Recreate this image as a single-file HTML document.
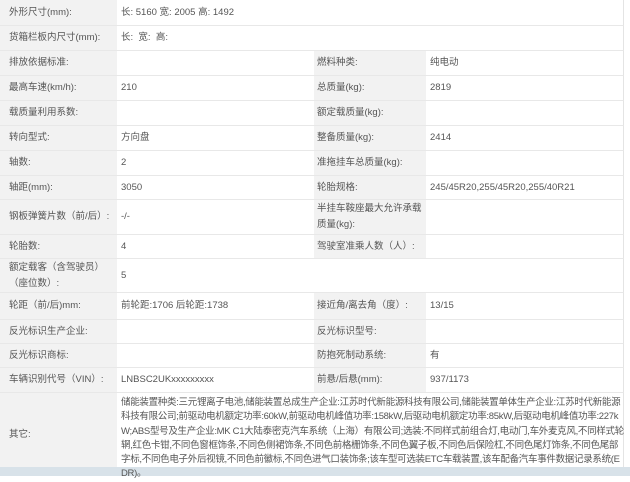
<!DOCTYPE html><html><head><meta charset="utf-8"><style>
body{margin:0;width:630px;height:476px;overflow:hidden;background:#fff;font-family:"Liberation Sans","Noto Sans CJK SC",sans-serif;font-size:9.5px;color:#555;position:relative}
.r{position:absolute;left:0;width:624px;border-bottom:1px solid #e8e8e8;border-right:1px solid #e4e4e4;box-sizing:border-box}
.c{position:absolute;top:0;bottom:0;display:flex;align-items:center;box-sizing:border-box;padding-left:9px;line-height:16px}
.l1{left:0;width:117px;background:#f2f2f2}
.v1{left:117px;width:197px;padding-left:4px}
.l2{left:314px;width:112px;background:#f2f2f2;padding-left:3px}
.v2{left:426px;width:197px;padding-left:4px}
.vf{left:117px;right:0;padding-left:4px}
.o{position:absolute;left:121px;top:396px;width:503px;overflow:hidden;line-height:14.3px;letter-spacing:-0.3px;white-space:nowrap}
</style></head><body>
<div class="r" style="top:0;height:26px"><div class="c l1">外形尺寸(mm):</div><div class="c vf">长: 5160 宽: 2005 高: 1492</div></div>
<div class="r" style="top:26px;height:25px"><div class="c l1">货箱栏板内尺寸(mm):</div><div class="c vf">长: &nbsp;宽: &nbsp;高:</div></div>
<div class="r" style="top:51px;height:25px"><div class="c l1">排放依据标准:</div><div class="c v1"></div><div class="c l2">燃料种类:</div><div class="c v2">纯电动</div></div>
<div class="r" style="top:76px;height:25px"><div class="c l1">最高车速(km/h):</div><div class="c v1">210</div><div class="c l2">总质量(kg):</div><div class="c v2">2819</div></div>
<div class="r" style="top:101px;height:25px"><div class="c l1">载质量利用系数:</div><div class="c v1"></div><div class="c l2">额定载质量(kg):</div><div class="c v2"></div></div>
<div class="r" style="top:126px;height:25px"><div class="c l1">转向型式:</div><div class="c v1">方向盘</div><div class="c l2">整备质量(kg):</div><div class="c v2">2414</div></div>
<div class="r" style="top:151px;height:25px"><div class="c l1">轴数:</div><div class="c v1">2</div><div class="c l2">准拖挂车总质量(kg):</div><div class="c v2"></div></div>
<div class="r" style="top:176px;height:24px"><div class="c l1">轴距(mm):</div><div class="c v1">3050</div><div class="c l2">轮胎规格:</div><div class="c v2">245/45R20,255/45R20,255/40R21</div></div>
<div class="r" style="top:200px;height:35px"><div class="c l1">钢板弹簧片数（前/后）:</div><div class="c v1">-/-</div><div class="c l2">半挂车鞍座最大允许承载质量(kg):</div><div class="c v2"></div></div>
<div class="r" style="top:235px;height:24px"><div class="c l1">轮胎数:</div><div class="c v1">4</div><div class="c l2">驾驶室准乘人数（人）:</div><div class="c v2"></div></div>
<div class="r" style="top:259px;height:34px"><div class="c l1">额定载客（含驾驶员）（座位数）:</div><div class="c vf">5</div></div>
<div class="r" style="top:293px;height:27px"><div class="c l1">轮距（前/后)mm:</div><div class="c v1">前轮距:1706 后轮距:1738</div><div class="c l2">接近角/离去角（度）:</div><div class="c v2">13/15</div></div>
<div class="r" style="top:320px;height:24px"><div class="c l1">反光标识生产企业:</div><div class="c v1"></div><div class="c l2">反光标识型号:</div><div class="c v2"></div></div>
<div class="r" style="top:344px;height:24px"><div class="c l1">反光标识商标:</div><div class="c v1"></div><div class="c l2">防抱死制动系统:</div><div class="c v2">有</div></div>
<div class="r" style="top:368px;height:25px"><div class="c l1">车辆识别代号（VIN）:</div><div class="c v1">LNBSC2UKxxxxxxxxx</div><div class="c l2">前悬/后悬(mm):</div><div class="c v2">937/1173</div></div>
<div class="r" style="top:393px;height:83px;border-bottom:none"><div class="c l1">其它:</div></div>
<div style="position:absolute;left:0;top:467px;width:630px;height:9px;background:#d8e2e9"></div>
<div class="o">储能装置种类:三元锂离子电池,储能装置总成生产企业:江苏时代新能源科技有限公司,储能装置单体生产企业:江苏时代新能源<br>科技有限公司;前驱动电机额定功率:60kW,前驱动电机峰值功率:158kW,后驱动电机额定功率:85kW,后驱动电机峰值功率:227k<br>W;ABS型号及生产企业:MK C1大陆泰密克汽车系统（上海）有限公司;选装:不同样式前组合灯,电动门,车外麦克风,不同样式轮<br>辋,红色卡钳,不同色窗框饰条,不同色侧裙饰条,不同色前格栅饰条,不同色翼子板,不同色后保险杠,不同色尾灯饰条,不同色尾部<br>字标,不同色电子外后视镜,不同色前徽标,不同色进气口装饰条;该车型可选装ETC车载装置,该车配备汽车事件数据记录系统(E<br>DR)。</div>
</body></html>
